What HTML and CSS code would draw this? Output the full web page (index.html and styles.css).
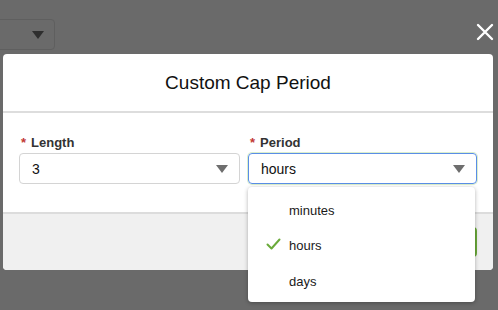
FILE: index.html
```html
<!DOCTYPE html>
<html lang="en">
<head>
    <meta charset="UTF-8">
    <meta name="viewport" content="width=device-width, initial-scale=1.0">
    <link rel="stylesheet" href="styles.css">
</head>
<body>
    <!-- 뒤에 깔린 화면 (오버레이로 어둡게) -->
    <div class="topbar">
        <div class="bg-select"><span class="caret dark"></span></div>
        <button class="close-btn" aria-label="Close">
            <svg width="18" height="18" viewBox="0 0 18 18">
                <path d="M2 2 L16 16 M16 2 L2 16" stroke="#fff" stroke-width="2.4" stroke-linecap="round"/>
            </svg>
        </button>
    </div>

    <!-- 모달 -->
    <div class="modal">
        <div class="modal-header">Custom Cap Period</div>

        <div class="modal-body">
            <div class="field">
                <label><span class="req">*</span>Length</label>
                <div class="select">3<span class="caret"></span></div>
            </div>
            <div class="field period">
                <label><span class="req">*</span>Period</label>
                <div class="select focused">hours<span class="caret"></span></div>

                <!-- 드롭다운 목록 -->
                <ul class="dropdown">
                    <li>minutes</li>
                    <li class="checked">
                        <svg class="check" width="15" height="12" viewBox="0 0 15 12">
                            <path d="M1.5 6.5 L5.5 10.5 L13.5 1.5" fill="none" stroke="#6aaa3a" stroke-width="2" stroke-linecap="round" stroke-linejoin="round"/>
                        </svg>hours
                    </li>
                    <li>days</li>
                </ul>
            </div>
        </div>

        <div class="modal-footer">
            <button class="save-btn">Save</button>
        </div>
    </div>
</body>
</html>
```

FILE: styles.css
```css
/* 공통 스타일 */
html {
    height: 100%;
}

body {
    margin: 0;
    padding: 0;
    min-height: 100%;
    background-color: #6a6a6a;
    font-family: "Liberation Sans", Arial, sans-serif;
    color: #1a1a1a;
    overflow: hidden;
}

/* 상단 (배경 요소) */
.topbar {
    display: flex;
    justify-content: space-between;
    align-items: flex-start;
    height: 54px;
}

.bg-select {
    margin-top: 19px;
    margin-left: -10px;
    width: 65px;
    height: 31px;
    border: 1px solid #5f5f5f;
    border-radius: 4px;
    display: flex;
    align-items: center;
    justify-content: flex-end;
    padding-right: 10px;
    box-sizing: border-box;
}

.close-btn {
    margin-top: 23px;
    margin-right: 4px;
    background: none;
    border: none;
    padding: 0;
    width: 18px;
    height: 18px;
}

/* 드롭다운 삼각형 */
.caret {
    width: 0;
    height: 0;
    border-left: 6.5px solid transparent;
    border-right: 6.5px solid transparent;
    border-top: 8px solid #6e6e6e;
}

.caret.dark {
    border-top-color: #2e2e2e;
}

/* 모달 */
.modal {
    margin-left: 3px;
    width: 490px;
    background-color: #fff;
    border-radius: 4px;
}

.modal-header {
    height: 57px;
    display: flex;
    align-items: center;
    justify-content: center;
    font-size: 19px;
    color: #111;
    border-bottom: 2px solid #dddddd;
}

.modal-body {
    display: grid;
    grid-template-columns: 221px 1fr;
    gap: 8px;
    padding: 22px 16px 28px 16px;
}

.field label {
    display: block;
    font-size: 13px;
    font-weight: bold;
    color: #333;
    height: 17px;
    margin-bottom: 1px;
}

.req {
    color: #c23934;
    margin-right: 5px;
    margin-left: 2px;
}

.select {
    height: 31px;
    box-sizing: border-box;
    border: 1px solid #d4d4d4;
    border-radius: 4px;
    padding: 0 11px 0 12px;
    display: flex;
    align-items: center;
    justify-content: space-between;
    font-size: 14px;
    color: #111;
}

.select.focused {
    border-color: #5a8ee6;
    box-shadow: 0 0 0 1px #dcefcc;
}

.period {
    position: relative;
}

/* 드롭다운 목록 */
.dropdown {
    position: absolute;
    top: 52px;
    left: 0;
    width: 227px;
    margin: 0;
    padding: 6px 0 2px 0;
    list-style: none;
    background-color: #fff;
    border-radius: 4px;
    box-shadow: 0 1px 4px rgba(0, 0, 0, 0.3);
    z-index: 10;
}

.dropdown li {
    height: 35px;
    display: flex;
    align-items: center;
    padding-left: 41px;
    font-size: 13px;
    color: #1a1a1a;
    position: relative;
}

.dropdown li:last-child {
    height: 37px;
}

.check {
    position: absolute;
    left: 18px;
    top: 10px;
}

/* 하단 */
.modal-footer {
    height: 56px;
    background-color: #f0f0f0;
    border-top: 2px solid #dcdcdc;
    border-radius: 0 0 4px 4px;
    display: flex;
    align-items: center;
    justify-content: flex-end;
    padding-right: 16px;
}

.save-btn {
    background-color: #6aaa3a;
    color: #fff;
    border: none;
    border-radius: 4px;
    height: 30px;
    padding: 0 14px;
    font-size: 13px;
}
```
